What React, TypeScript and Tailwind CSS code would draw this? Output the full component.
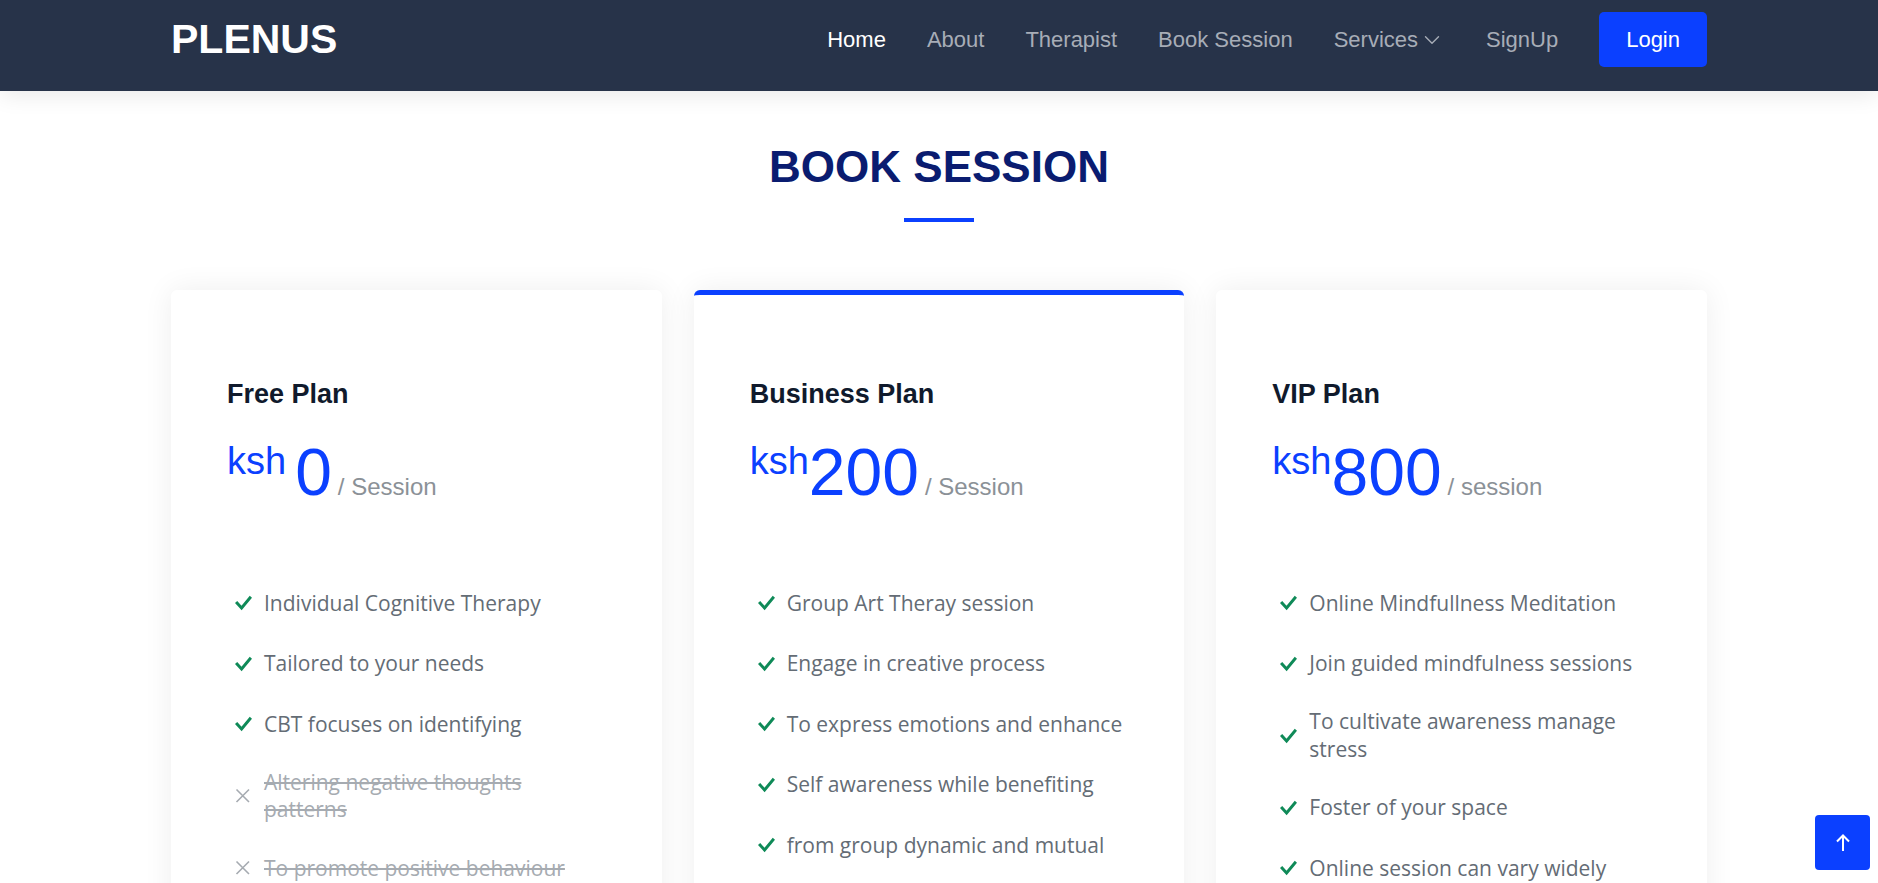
import React from 'react';
import { ChevronDown } from 'lucide-react';

type Feature = { text: string; included: boolean };

type Plan = {
  name: string;
  amount: string;
  spaced: boolean;
  unit: string;
  featured: boolean;
  features: Feature[];
};

const plans: Plan[] = [
  {
    name: 'Free Plan',
    amount: '0',
    spaced: true,
    unit: '/ Session',
    featured: false,
    features: [
      { text: 'Individual Cognitive Therapy', included: true },
      { text: 'Tailored to your needs', included: true },
      { text: 'CBT focuses on identifying', included: true },
      { text: 'Altering negative thoughts patterns', included: false },
      { text: 'To promote positive behaviour', included: false },
    ],
  },
  {
    name: 'Business Plan',
    amount: '200',
    spaced: false,
    unit: '/ Session',
    featured: true,
    features: [
      { text: 'Group Art Theray session', included: true },
      { text: 'Engage in creative process', included: true },
      { text: 'To express emotions and enhance', included: true },
      { text: 'Self awareness while benefiting', included: true },
      { text: 'from group dynamic and mutual', included: true },
    ],
  },
  {
    name: 'VIP Plan',
    amount: '800',
    spaced: false,
    unit: '/ session',
    featured: false,
    features: [
      { text: 'Online Mindfullness Meditation', included: true },
      { text: 'Join guided mindfulness sessions', included: true },
      { text: 'To cultivate awareness manage stress', included: true },
      { text: 'Foster of your space', included: true },
      { text: 'Online session can vary widely', included: true },
    ],
  },
];

const links = ['About', 'Therapist', 'Book Session'];

function CheckIcon() {
  return (
    <svg width="17" height="32" viewBox="0 0 17 32" className="shrink-0">
      <polyline points="1.1,15 6.6,21 15.9,9.8" fill="none" stroke="#0f8a58" strokeWidth="3" />
    </svg>
  );
}

function CrossIcon() {
  return (
    <svg width="17" height="32" viewBox="0 0 17 32" className="shrink-0">
      <path d="M1.5 9.5 14 22M14 9.5 1.5 22" fill="none" stroke="#a6abb1" strokeWidth="1.6" />
    </svg>
  );
}

function PlanCard({ plan }: { plan: Plan }) {
  return (
    <div
      className={`rounded-md bg-white border-t-[5px] px-14 pt-[83px] pb-14 shadow-[0_0_30px_rgba(0,0,0,0.07)] ${
        plan.featured ? 'border-[#0b40ff]' : 'border-transparent'
      }`}
    >
      <h3 className="text-[27px] leading-[33px] font-bold text-[#101a2c] mb-[28px]">{plan.name}</h3>

      <div className="flex items-baseline text-[#0b40ff]">
        <span className="self-start mt-[3px] text-[38px] leading-none">ksh</span>
        <span className={`text-[66px] leading-none ${plan.spaced ? 'ml-[9px]' : ''}`}>{plan.amount}</span>
        <span className="ml-[6px] text-[24px] text-[#8b9197]">{plan.unit}</span>
      </div>

      <ul className="mt-[68px] font-['Open_Sans',sans-serif] text-[21px] leading-[27.5px]">
        {plan.features.map((f) => (
          <li key={f.text} className="flex items-center gap-3 pl-2 py-[14.25px]">
            {f.included ? <CheckIcon /> : <CrossIcon />}
            <span className={f.included ? 'text-[#646c75]' : 'text-[#a6abb1] line-through'}>{f.text}</span>
          </li>
        ))}
      </ul>

      <div className="mt-8 flex justify-center">
        <button className="rounded-md border border-[#0b40ff] px-10 py-3 text-[18px] text-[#0b40ff]">Book Now</button>
      </div>
    </div>
  );
}

export default function App() {
  return (
    <div className="min-h-screen bg-white font-['Liberation_Sans',Arial,sans-serif]">
      <header className="relative z-10 bg-[#273349] shadow-[0_4px_22px_rgba(0,0,0,0.09)]">
        <div className="mx-auto flex max-w-[1536px] items-center justify-between pt-3 pb-6">
          <a href="#" className="text-[41px] font-bold leading-none text-white">PLENUS</a>

          <nav className="flex items-center gap-[41px] text-[22px] text-[#a7adb7]">
            <a href="#" className="text-white">Home</a>
            {links.map((l) => (
              <a key={l} href="#">{l}</a>
            ))}
            <a href="#" className="flex items-center">
              Services
              <ChevronDown size={26} strokeWidth={1.3} className="ml-[1px]" />
            </a>
            <a href="#">SignUp</a>
            <button className="h-[55px] rounded-[5px] bg-[#0b40ff] px-[27px] text-white">Login</button>
          </nav>
        </div>
      </header>

      <main className="pt-[49px] pb-24">
        <h2 className="text-center text-[44px] font-bold leading-[53px] text-[#0a1c70]">BOOK SESSION</h2>
        <div className="mx-auto mt-[25px] h-[4px] w-[70px] bg-[#0b40ff]"></div>

        <div className="mx-auto mt-[68px] grid max-w-[1536px] grid-cols-3 items-start gap-8">
          {plans.map((p) => (
            <PlanCard key={p.name} plan={p} />
          ))}
        </div>
      </main>

      <button className="fixed bottom-[13px] right-[8px] flex h-[55px] w-[55px] items-center justify-center rounded-[4px] bg-[#0b40ff]">
        <svg width="16" height="18" viewBox="0 0 16 18">
          <path d="M8 17V1.5M2 7.5 8 1.5l6 6" fill="none" stroke="white" strokeWidth="2" />
        </svg>
      </button>
    </div>
  );
}
